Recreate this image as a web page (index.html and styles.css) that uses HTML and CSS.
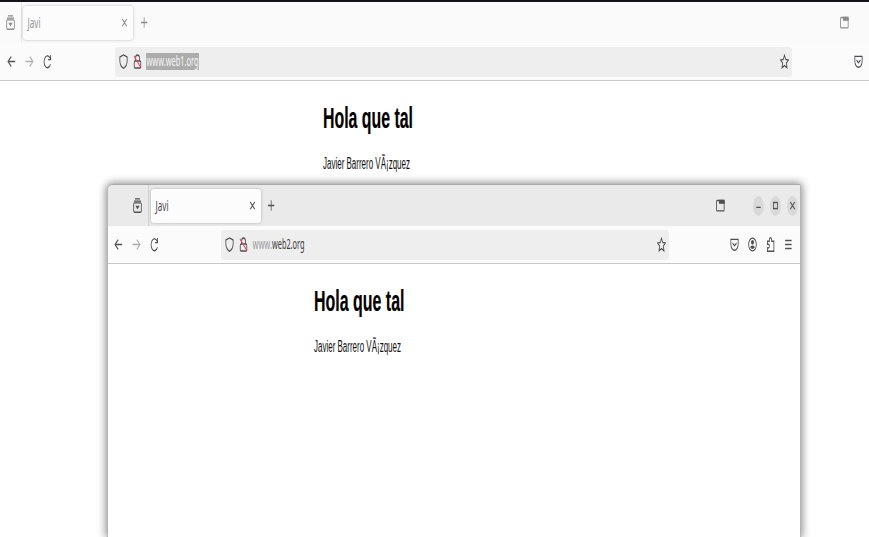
FILE: index.html
```html
<!DOCTYPE html>
<html lang="es">
<head>
<meta charset="utf-8">
<title>Javi</title>
<link rel="stylesheet" href="styles.css">
</head>
<body>
<svg class="defs" aria-hidden="true">
  <symbol id="list" viewBox="0 0 16 16" preserveAspectRatio="none"><path d="M3.500 .9h9M1.800 3.300h12.400"/><rect x="1.200" y="5.200" width="13.600" height="10" rx="1.500"/><path d="M6 9h4l-2 2.200z" fill="currentColor"/></symbol>
  <symbol id="back" viewBox="0 0 16 16" preserveAspectRatio="none"><path d="M14.500 8H1.800M7.500 2.800L1.800 8l5.700 5.200"/></symbol>
  <symbol id="forward" viewBox="0 0 16 16" preserveAspectRatio="none"><path d="M1 8h13M8.500 2.800L14 8l-5.500 5.200"/></symbol>
  <symbol id="reload" viewBox="0 0 16 16" preserveAspectRatio="none"><path d="M13 5A6 6.300 0 1 0 13.300 11M13.500 1v5H9"/></symbol>
  <symbol id="shield" viewBox="0 0 16 16" preserveAspectRatio="none"><path d="M8 1L14.500 3.300V7c0 3.500-2 6.500-6.500 8.300C3.500 13.500 1.500 10.500 1.500 7V3.300z"/></symbol>
  <symbol id="lock" viewBox="0 0 16 16" preserveAspectRatio="none"><path d="M4.500 7.500V4.500a3.500 3.500 0 0 1 7 0v3"/><rect x="2.200" y="7.500" width="11.600" height="7.500" rx="1.500"/><path d="M1.500 2L14.500 15" class="slash"/></symbol>
  <symbol id="star" viewBox="0 0 16 16" preserveAspectRatio="none"><path d="M8 1.300l2.100 4.500 4.900.6-3.600 3.300 1 5L8 12.300 3.600 14.700l1-5L1 6.400l4.900-.6z"/></symbol>
  <symbol id="pocket" viewBox="0 0 16 16" preserveAspectRatio="none"><path d="M1.500 2.500h13V7.500c0 4-3 6.700-6.500 6.700S1.500 11.500 1.500 7.500zM4.500 6.500L8 9.500l3.500-3"/></symbol>
  <symbol id="account" viewBox="0 0 16 16" preserveAspectRatio="none"><circle cx="8" cy="8" r="6.800"/><circle cx="8" cy="5.700" r="1.800" fill="currentColor"/><path d="M5 11c0-1.600 6-1.600 6 0-1.500 1.300-4.500 1.300-6 0z" fill="currentColor"/></symbol>
  <symbol id="puzzle" viewBox="0 0 16 16" preserveAspectRatio="none"><path d="M2.500 4.500H6V3a2 2.200 0 0 1 4 0v1.500h4v10.700H2.500v-3.500H4a2 2 0 0 0 0-4H2.500z"/></symbol>
  <symbol id="menu" viewBox="0 0 16 16" preserveAspectRatio="none"><path d="M2 3.700h11.500M2 8h11.500M2 12.300h11.500"/></symbol>
  <symbol id="frame" viewBox="0 0 16 16" preserveAspectRatio="none"><rect x="1" y="2.700" width="13.500" height="11" rx="1"/><path d="M6 2.700h8.500V5.500H6z" fill="currentColor"/></symbol>
  <symbol id="cross" viewBox="0 0 16 16" preserveAspectRatio="none"><path d="M4 4.300l8 7.800M12 4.300l-8 7.800"/></symbol>
  <symbol id="plus" viewBox="0 0 16 16" preserveAspectRatio="none"><path d="M2 8h12.500M8.300 2.500v11"/></symbol>
  <symbol id="minimize" viewBox="0 0 16 16" preserveAspectRatio="none"><path d="M4 10h8"/></symbol>
  <symbol id="maximize" viewBox="0 0 16 16" preserveAspectRatio="none"><rect x="4.500" y="4.800" width="7" height="6.500"/></symbol>
</svg>

<main class="browser rear">
  <header class="tabbar">
    <span class="list"><svg class="icon"><use href="#list"/></svg></span>
    <div class="tab">
      <svg class="label" width="16" height="20"><text x="0.500" y="14.500" textLength="13" lengthAdjust="spacingAndGlyphs">Javi</text></svg>
      <svg class="icon"><use href="#cross"/></svg>
    </div>
    <span class="cell new"><svg class="icon"><use href="#plus"/></svg></span>
    <span class="cell view"><svg class="icon"><use href="#frame"/></svg></span>
  </header>
  <nav class="toolbar">
    <span class="cell"><svg class="icon"><use href="#back"/></svg></span>
    <span class="cell off"><svg class="icon"><use href="#forward"/></svg></span>
    <span class="cell"><svg class="icon"><use href="#reload"/></svg></span>
    <div class="url">
      <svg class="icon"><use href="#shield"/></svg>
      <svg class="icon"><use href="#lock"/></svg>
      <span class="address selected"><svg width="53" height="17"><text x="0.500" y="12.800" textLength="52" lengthAdjust="spacingAndGlyphs">www.web1.org</text></svg></span>
      <svg class="icon star"><use href="#star"/></svg>
    </div>
    <span class="cell end"><svg class="icon"><use href="#pocket"/></svg></span>
  </nav>
  <article class="page">
    <h1><svg width="100" height="36"><text x="0" y="27" textLength="90" lengthAdjust="spacingAndGlyphs">Hola que tal</text></svg></h1>
    <p><svg width="96" height="22"><text x="0" y="16.500" textLength="87" lengthAdjust="spacingAndGlyphs">Javier Barrero VÃ¡zquez</text></svg></p>
  </article>
</main>

<section class="browser front">
  <header class="tabbar">
    <span class="list"><svg class="icon"><use href="#list"/></svg></span>
    <div class="tab">
      <svg class="label" width="16" height="20"><text x="0.500" y="14.500" textLength="13" lengthAdjust="spacingAndGlyphs">Javi</text></svg>
      <svg class="icon"><use href="#cross"/></svg>
    </div>
    <span class="cell new"><svg class="icon"><use href="#plus"/></svg></span>
    <span class="cell view"><svg class="icon"><use href="#frame"/></svg></span>
    <div class="controls">
      <span><svg class="icon"><use href="#minimize"/></svg></span>
      <span><svg class="icon"><use href="#maximize"/></svg></span>
      <span><svg class="icon"><use href="#cross"/></svg></span>
    </div>
  </header>
  <nav class="toolbar">
    <span class="cell"><svg class="icon"><use href="#back"/></svg></span>
    <span class="cell off"><svg class="icon"><use href="#forward"/></svg></span>
    <span class="cell"><svg class="icon"><use href="#reload"/></svg></span>
    <div class="url">
      <svg class="icon"><use href="#shield"/></svg>
      <svg class="icon"><use href="#lock"/></svg>
      <span class="address"><svg width="20" height="17"><text class="dim" x="0.500" y="12.800" textLength="19.500" lengthAdjust="spacingAndGlyphs">www.</text></svg><svg width="36" height="17"><text x="0" y="12.800" textLength="32.500" lengthAdjust="spacingAndGlyphs">web2.org</text></svg></span>
      <svg class="icon star"><use href="#star"/></svg>
    </div>
    <span class="cell end"><svg class="icon"><use href="#pocket"/></svg></span>
    <span class="cell"><svg class="icon"><use href="#account"/></svg></span>
    <span class="cell"><svg class="icon"><use href="#puzzle"/></svg></span>
    <span class="cell"><svg class="icon"><use href="#menu"/></svg></span>
  </nav>
  <article class="page">
    <h1><svg width="100" height="36"><text x="0" y="27" textLength="90.500" lengthAdjust="spacingAndGlyphs">Hola que tal</text></svg></h1>
    <p><svg width="96" height="22"><text x="0" y="16.500" textLength="87" lengthAdjust="spacingAndGlyphs">Javier Barrero VÃ¡zquez</text></svg></p>
  </article>
</section>
</body>
</html>
```
FILE: styles.css
```css
* { box-sizing: border-box; }
html, body { height: 100%; overflow: hidden; }
body { margin: 0; position: relative; background: #fff; font-family: "Noto Sans", "Open Sans", sans-serif; }
svg { display: block; flex: none; overflow: visible; }
.defs { position: absolute; width: 0; height: 0; }
.icon { width: 9px; height: 15px; fill: none; stroke: currentColor; stroke-width: 1.5; color: #505053; }
.slash { stroke: #ed3a60; stroke-width: 1.5; }
.browser { background: #fff; }
.rear { height: 537px; border-top: 2px solid #161318; }
.tabbar { display: flex; align-items: center; height: 41px; background: #fafafa; }
.list { display: flex; align-items: center; justify-content: flex-end; width: 22px; height: 100%; padding-right: 6.500px; border-right: 1px solid #e9e9e9; }
.tab { display: flex; align-items: center; justify-content: space-between; width: 110px; height: 34px; margin-left: 1px; padding: 0 4px; border-radius: 3px; background: #fcfcfc; box-shadow: 0 0 3px rgba(0, 0, 0, .26); }
.label text { font-size: 13.500px; fill: #48484b; }
.rear .tabbar .icon { color: #8b8b8d; }
.rear .label text { fill: #929294; }
.cell { display: flex; align-items: center; justify-content: center; width: 18px; height: 30px; flex: none; }
.new { margin-left: 2px; }
.new .icon { width: 8px; }
.view { margin-left: auto; }
.rear .view { margin-right: 16px; }
.toolbar { display: flex; align-items: center; height: 38px; padding-left: 2.500px; background: #fbfbfb; border-bottom: 1px solid #c8c8c8; }
.off { opacity: .45; }
.url { display: flex; align-items: center; width: 677px; height: 30px; margin-left: 58.500px; padding: 0 3.500px 0 4px; gap: 5px; border-radius: 3px; background: #eee; }
.address { display: flex; margin-left: -1px; }
.address text { font-size: 13.500px; fill: #3c3c3f; }
.address .dim { fill: #9b9b9d; }
.selected { background: #acacac; }
.selected text { fill: #f5f5f5; }
.star { margin-left: auto; }
.rear .end { margin-left: 57.500px; }
.page { padding: 20px 0 0 323px; }
h1, p { margin: 0; font-family: "Liberation Sans", sans-serif; }
h1 { height: 36px; }
h1 text { font-size: 29.500px; font-weight: 700; fill: #000; stroke: #000; stroke-width: .2; }
p { margin-top: 15px; }
p text { font-size: 16px; fill: #111; }

.front { position: absolute; left: 107px; top: 184px; width: 694px; height: 353px; border-top: 1px solid #aaa; border-left: 1px solid #b5b5b5; border-right: 1px solid #b5b5b5; border-radius: 6px 2px 0 0; overflow: hidden; box-shadow: 0 0 9px 1px rgba(0, 0, 0, .48); }
.front .tabbar { background: #eaeaea; }
.front .list { width: 41px; border-color: #d3d3d3; }
.front .tab { margin-left: 2px; }
.front .new { margin-left: 1px; }
.front .view { margin-right: 24px; }
.controls { display: flex; gap: 6px; margin-right: 2px; }
.controls span { display: flex; align-items: center; justify-content: center; width: 11px; height: 20px; border-radius: 50%; background: #d9d9d9; }
.front .toolbar { padding-left: 1.500px; }
.front .url { width: 448px; margin-left: 57.500px; }
.front .end { margin-left: 56.500px; }
.front .page { padding-left: 206px; }
```
